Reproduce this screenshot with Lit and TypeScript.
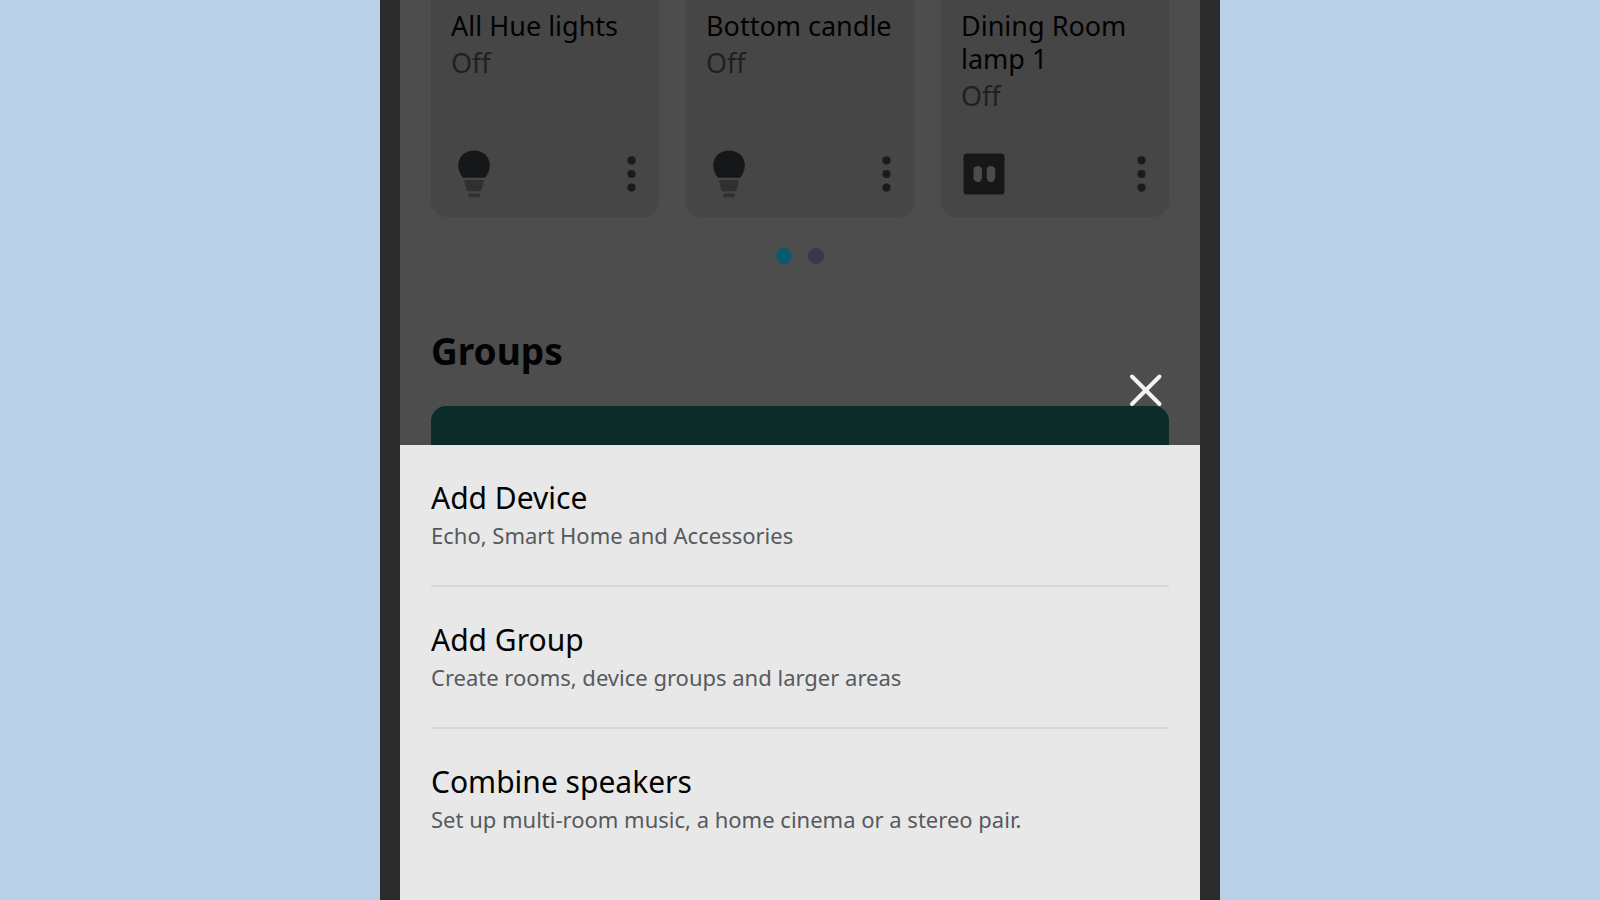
import { LitElement, html, css, svg } from "lit";
import { customElement, property } from "lit/decorators.js";

type DeviceKind = "bulb" | "plug";

interface Device {
  name: string;
  status: string;
  kind: DeviceKind;
}

interface SheetAction {
  title: string;
  detail: string;
}

const devices: Device[] = [
  { name: "All Hue lights", status: "Off", kind: "bulb" },
  { name: "Bottom candle", status: "Off", kind: "bulb" },
  { name: "Dining Room lamp 1", status: "Off", kind: "plug" },
];

const actions: SheetAction[] = [
  { title: "Add Device", detail: "Echo, Smart Home and Accessories" },
  { title: "Add Group", detail: "Create rooms, device groups and larger areas" },
  { title: "Combine speakers", detail: "Set up multi-room music, a home cinema or a stereo pair." },
];

const bulbShape = svg`
  <path fill="#161719" d="M23 0.5C32.5 0.5 38.8 7 38.8 15.5C38.8 20.5 36.6 24.5 34 27.7H12C9.4 24.5 7.2 20.5 7.2 15.5C7.2 7 13.5 0.5 23 0.5Z"/>
  <path fill="#303032" d="M13 30H33L30.8 39.6Q30.4 41.3 28.8 41.3H17.2Q15.6 41.3 15.2 39.6Z"/>
  <rect fill="#303032" x="17.2" y="43.4" width="11.8" height="3.8" rx="1.5"/>`;

const plugShape = svg`
  <rect fill="#161719" x="2.5" y="3.5" width="41" height="41" rx="3"/>
  <rect fill="#4b4b4b" x="12.5" y="16" width="8.5" height="16" rx="4.2"/>
  <rect fill="#4b4b4b" x="25.7" y="16" width="8.5" height="16" rx="4.2"/>`;

@customElement("device-card")
export class DeviceCard extends LitElement {
  @property({ attribute: false }) device!: Device;

  static styles = css`
    :host {
      display: flex;
      flex-direction: column;
      box-sizing: border-box;
      min-width: 0;
      min-height: 217px;
      padding: 9px 20px 19px;
      border-radius: 0 0 15px 15px;
      background: #464646;
    }
    .name,
    .status {
      margin: 0;
      font-size: 27px;
      font-weight: 400;
      line-height: 33px;
    }
    .name {
      color: #020203;
    }
    .status {
      margin-top: 4px;
      color: #1f2022;
    }
    .footer {
      display: flex;
      justify-content: space-between;
      margin-top: auto;
    }
    .icon {
      display: block;
      width: 46px;
      height: 48px;
    }
    .more {
      width: 16px;
      height: 48px;
      padding: 0;
      border: 0;
      background: none;
      cursor: pointer;
    }
    .dots {
      display: block;
      width: 16px;
      height: 48px;
    }
  `;

  render() {
    const { name, status, kind } = this.device;
    return html`
      <h3 class="name">${name}</h3>
      <p class="status">${status}</p>
      <div class="footer">
        <svg class="icon" viewBox="0 0 46 48" aria-hidden="true">
          ${kind === "bulb" ? bulbShape : plugShape}
        </svg>
        <button class="more" type="button" aria-label="More options">
          <svg class="dots" viewBox="0 0 16 48" fill="#1a1b1c" aria-hidden="true">
            <circle cx="8.5" cy="10.4" r="4.1" />
            <circle cx="8.5" cy="24" r="4.1" />
            <circle cx="8.5" cy="37.6" r="4.1" />
          </svg>
        </button>
      </div>
    `;
  }
}

@customElement("action-sheet")
export class ActionSheet extends LitElement {
  static styles = css`
    :host {
      display: block;
      position: relative;
      padding: 0 31px 31px;
      background: #e8e8e8;
    }
    .list {
      margin: 0;
      padding: 0;
      list-style: none;
    }
    .item + .item {
      border-top: 2px solid #d9d9d9;
    }
    .action {
      display: flex;
      flex-direction: column;
      gap: 1px;
      width: 100%;
      padding: 33px 0 34px;
      border: 0;
      background: none;
      font: inherit;
      text-align: left;
      cursor: pointer;
    }
    .title {
      color: #020305;
      font-size: 30px;
      line-height: 40px;
    }
    .detail {
      color: #565a5e;
      font-size: 22px;
      line-height: 32px;
    }
    .close {
      position: absolute;
      right: 34px;
      bottom: 100%;
      width: 40px;
      height: 40px;
      margin-bottom: 35px;
      padding: 0;
      border: 0;
      background: none;
      cursor: pointer;
    }
    .cross {
      display: block;
      width: 40px;
      height: 40px;
    }
  `;

  render() {
    return html`
      <button class="close" type="button" aria-label="Close">
        <svg class="cross" viewBox="0 0 40 40" fill="none" stroke="#f2f2f2" stroke-width="4" stroke-linecap="round" aria-hidden="true">
          <path d="M6 6.5L33.5 34M33.5 6.5L6 34" />
        </svg>
      </button>
      <ul class="list">
        ${actions.map(
          (a) => html`
            <li class="item">
              <button class="action" type="button">
                <span class="title">${a.title}</span>
                <span class="detail">${a.detail}</span>
              </button>
            </li>
          `
        )}
      </ul>
    `;
  }
}

@customElement("app-root")
export class AppRoot extends LitElement {
  static styles = css`
    :host {
      display: flex;
      justify-content: center;
      height: 100vh;
      overflow: hidden;
      background: #bad0e6;
      font-family: "Noto Sans", "Open Sans", sans-serif;
    }
    .phone {
      display: flex;
      flex-direction: column;
      box-sizing: border-box;
      width: 100%;
      max-width: 840px;
      border: solid #2b2b2b;
      border-width: 0 20px;
    }
    .home {
      flex: 1;
      min-height: 0;
      overflow: hidden;
      padding: 0 31px;
      background: #4d4d4d;
    }
    .cards {
      display: grid;
      grid-template-columns: repeat(3, 1fr);
      gap: 27px;
    }
    .pager {
      display: flex;
      justify-content: center;
      gap: 16px;
      margin-top: 31px;
    }
    .page {
      width: 16px;
      height: 16px;
      padding: 0;
      border: 0;
      border-radius: 50%;
      background: #353a4c;
    }
    .page.current {
      background: #08596f;
    }
    .heading {
      margin: 61px 0 29px;
      color: #020305;
      font-size: 37px;
      font-weight: 700;
      line-height: 52px;
    }
    .group {
      height: 120px;
      border-radius: 15px;
      background: #0c2c29;
    }
  `;

  render() {
    return html`
      <main class="phone">
        <section class="home">
          <div class="cards">
            ${devices.map((d) => html`<device-card .device=${d}></device-card>`)}
          </div>
          <nav class="pager" aria-label="Device pages">
            <button class="page current" type="button" aria-label="Page 1"></button>
            <button class="page" type="button" aria-label="Page 2"></button>
          </nav>
          <h2 class="heading">Groups</h2>
          <div class="group"></div>
        </section>
        <action-sheet></action-sheet>
      </main>
    `;
  }
}
